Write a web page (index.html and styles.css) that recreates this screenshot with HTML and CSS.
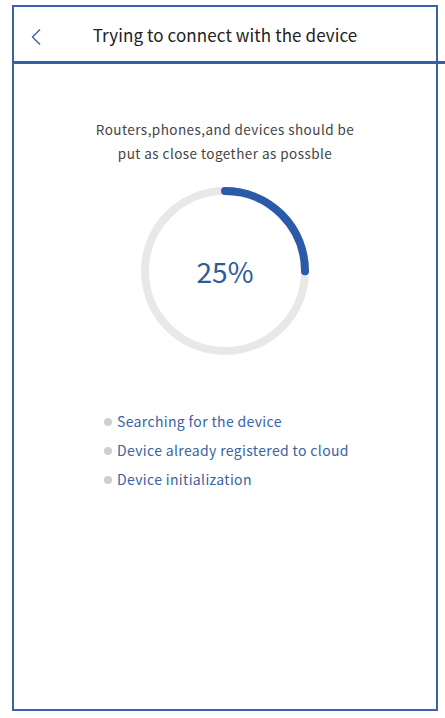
FILE: index.html
```html
<!DOCTYPE html>
<html>
<head>
<meta charset="utf-8">
<link rel="stylesheet" href="styles.css">
</head>
<body>
<div class="frame">
  <header class="header">
    <svg class="back" width="12" height="18" viewBox="0 0 12 18"><path d="M10 1.5 L2.5 9 L10 16.5" fill="none" stroke="#3a62a6" stroke-width="1.4"/></svg>
    <h1 class="title">Trying to connect with the device</h1>
  </header>
  <div class="divider"></div>
  <main class="content">
    <p class="hint">Routers,phones,and devices should be<br>put as close together as possble</p>
    <div class="ring">
      <svg width="176" height="176" viewBox="0 0 176 176">
        <circle cx="88" cy="88" r="80" fill="none" stroke="#e8e8e8" stroke-width="8"/>
        <circle cx="88" cy="88" r="80" fill="none" stroke="#2b5ba8" stroke-width="8" stroke-linecap="round" stroke-dasharray="125.66 502.65" transform="rotate(-90 88 88)"/>
      </svg>
      <div class="pct">25%</div>
    </div>
    <ul class="steps">
      <li class="step"><span class="dot"></span>Searching for the device</li>
      <li class="step"><span class="dot"></span>Device already registered to cloud</li>
      <li class="step"><span class="dot"></span>Device initialization</li>
    </ul>
  </main>
</div>
</body>
</html>
```
FILE: styles.css
```css
html, body {
  margin: 0;
  padding: 0;
  background: #fff;
  font-family: "Noto Sans CJK SC", "Noto Sans", sans-serif;
}
body {
  width: 445px;
  height: 718px;
  overflow: hidden;
  position: relative;
}
.frame {
  position: absolute;
  left: 12px;
  top: 5px;
  width: 422px;
  height: 702px;
  border: 2px solid #3d62a3;
  display: flex;
  flex-direction: column;
}
.header {
  height: 54px;
  display: flex;
  align-items: center;
  justify-content: center;
  position: relative;
}
.back {
  position: absolute;
  left: 16px;
  top: 21px;
}
.title {
  margin: 0;
  font-size: 17px;
  font-weight: 400;
  color: #222;
  letter-spacing: 0.1px;
}
.divider {
  height: 3px;
  background: #3360a6;
  margin-right: -9px;
}
.content {
  display: flex;
  flex-direction: column;
  align-items: center;
}
.hint {
  margin: 53px 0 0;
  font-size: 13.5px;
  line-height: 24px;
  color: #444;
  text-align: center;
  letter-spacing: 0.45px;
}
.ring {
  position: relative;
  width: 176px;
  height: 176px;
  margin-top: 18px;
}
.ring svg { display: block; }
.pct {
  position: absolute;
  inset: 0;
  display: flex;
  align-items: center;
  justify-content: center;
  font-size: 28px;
  color: #2d5a9e;
  padding-bottom: 1px;
}
.steps {
  list-style: none;
  margin: 48px 0 0;
  padding: 0;
  align-self: flex-start;
  margin-left: 90px;
}
.step {
  display: flex;
  align-items: center;
  font-size: 14px;
  line-height: 29px;
  color: #3a62a6;
  letter-spacing: 0.35px;
}
.dot {
  width: 8px;
  height: 8px;
  border-radius: 50%;
  background: #cfcfcf;
  margin-right: 5px;
}
```
